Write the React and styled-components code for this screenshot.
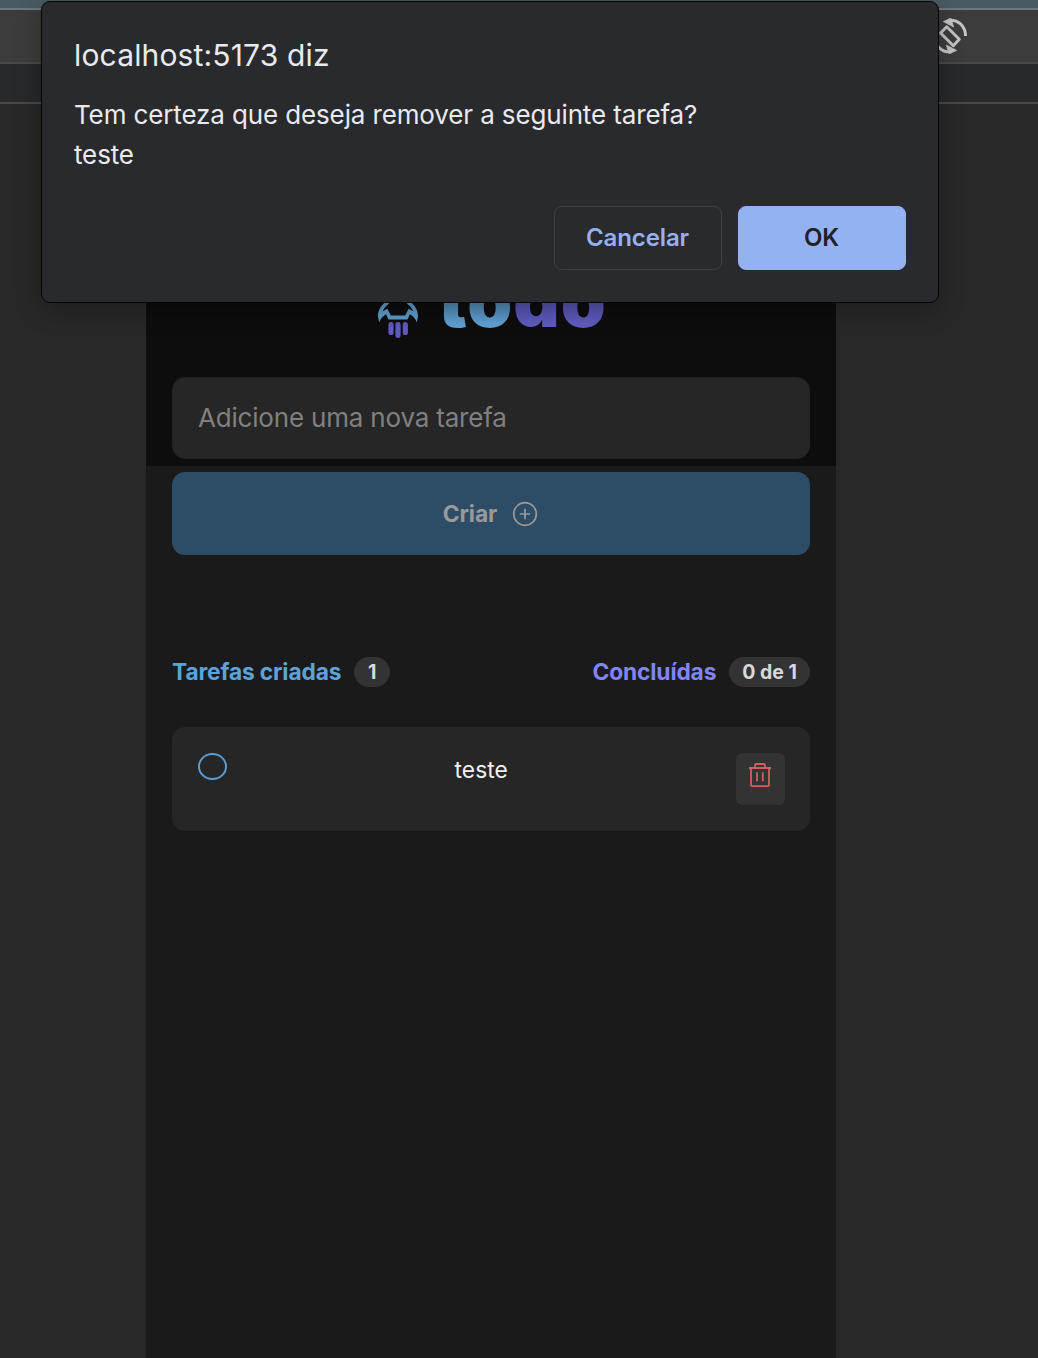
import React from "react";
import styled, { createGlobalStyle } from "styled-components";

const GlobalStyle = createGlobalStyle`
  * { box-sizing: border-box; }
  body {
    margin: 0;
    background: #282828;
    font-family: Inter, "Liberation Sans", sans-serif;
    -webkit-font-smoothing: antialiased;
  }
  h1, p { margin: 0; font-weight: 400; }
`;

const Screen = styled.div`
  height: 1358px;
  overflow: hidden;
  display: flex;
  flex-direction: column;
  position: relative;
`;

const TabStrip = styled.div`
  flex: none;
  height: 10px;
  background: #4a5a63;
  border-bottom: 2px solid #6c787e;
`;

const Toolbar = styled.div`
  flex: none;
  display: flex;
  align-items: center;
  justify-content: flex-end;
  height: ${(p) => p.$height}px;
  padding-right: 70px;
  background: ${(p) => p.$background};
  border-bottom: 2px solid #494949;
`;

const Device = styled.main`
  flex: 1;
  width: 690px;
  margin-left: 146px;
  background: #1a1a1a;
`;

const Header = styled.header`
  display: flex;
  align-items: flex-end;
  justify-content: center;
  gap: 20px;
  height: 362px;
  padding: 0 0 128px 3px;
  background: #0d0d0d;
`;

const Wordmark = styled.div`
  display: flex;
  height: 72px;
  align-items: center;
  margin-bottom: 1px;
  font-size: 72px;
  line-height: 72px;
  font-weight: 900;
  letter-spacing: 1px;
`;

const WordPart = styled.span`
  color: transparent;
  background: linear-gradient(${(p) => p.$from} 55%, ${(p) => p.$to} 80%);
  background-clip: text;
  -webkit-background-clip: text;
`;

const Content = styled.div`
  display: flex;
  flex-direction: column;
  padding: 0 26px;
  margin-top: -89.5px;
`;

const Form = styled.form`
  display: flex;
  flex-direction: column;
  gap: 13px;
`;

const TaskInput = styled.input`
  height: 82.5px;
  padding: 0 25px;
  border: 1px solid #222;
  border-radius: 13px;
  outline: none;
  background: #262626;
  color: #f2f2f2;
  font: 400 26px Inter, "Liberation Sans", sans-serif;
  letter-spacing: -0.19px;
  &::placeholder { color: #808080; opacity: 1; }
`;

const CreateButton = styled.button`
  display: flex;
  align-items: center;
  justify-content: center;
  gap: 15px;
  height: 82.5px;
  padding: 0 1px 0 0;
  border: 0;
  border-radius: 13px;
  background: #2d4d67;
  color: #999;
  font: 700 22.75px Inter, "Liberation Sans", sans-serif;
  letter-spacing: -0.1px;
`;

const Stats = styled.div`
  display: flex;
  justify-content: space-between;
  margin-top: 102px;
`;

const Stat = styled.div`
  display: flex;
  align-items: center;
  gap: 13px;
  color: ${(p) => p.$color};
  font-size: 22.75px;
  line-height: 26px;
  font-weight: 700;
  letter-spacing: -0.14px;
`;

const Badge = styled.span`
  min-width: 36px;
  padding: 3px 13px;
  border-radius: 15px;
  background: #333;
  color: #d9d9d9;
  font-size: 19.5px;
  line-height: 24px;
  letter-spacing: 0;
  text-align: center;
`;

const Task = styled.article`
  display: grid;
  grid-template-columns: 29.5px 1fr 49px;
  align-items: start;
  height: 104px;
  margin-top: 40.5px;
  padding: 26px 25.5px;
  border-radius: 13px;
  background: #262626;
`;

const Check = styled.button`
  height: 27px;
  padding: 0;
  border: 2px solid #5a9dd2;
  border-radius: 50%;
  background: transparent;
`;

const TaskText = styled.p`
  color: #f2f2f2;
  font-size: 22.75px;
  line-height: 33px;
  letter-spacing: 0.1px;
  text-align: center;
`;

const RemoveButton = styled.button`
  display: flex;
  justify-content: center;
  height: 52px;
  padding: 9px 0 0;
  border: 0;
  border-radius: 6.5px;
  background: #333;
`;

const Dialog = styled.section`
  position: absolute;
  top: 1px;
  left: 41px;
  width: 898px;
  height: 302px;
  display: flex;
  flex-direction: column;
  padding: 32px;
  border: 1px solid #050505;
  border-radius: 9px;
  background: #292a2d;
  color: #e8eaed;
  box-shadow: 0 6px 26px rgba(0, 0, 0, 0.28);
`;

const DialogTitle = styled.h1`
  font-size: 30px;
  line-height: 42px;
  letter-spacing: 0.15px;
`;

const DialogMessage = styled.p`
  margin-top: 19px;
  font-size: 26px;
  line-height: 40px;
  letter-spacing: -0.13px;
  white-space: pre-line;
`;

const DialogActions = styled.div`
  display: flex;
  justify-content: flex-end;
  gap: 16px;
  margin-top: auto;
`;

const DialogButton = styled.button`
  width: 168px;
  height: 64px;
  padding: 0 1px 2px 0;
  border: 1px solid ${(p) => (p.$primary ? "#94b1f2" : "#3c4043")};
  border-radius: 8px;
  background: ${(p) => (p.$primary ? "#94b1f2" : "transparent")};
  color: ${(p) => (p.$primary ? "#202124" : "#94b1f2")};
  font: 600 24px Inter, "Liberation Sans", sans-serif;
  letter-spacing: -0.1px;
`;

const RotateIcon = () => (
  <svg width="36" height="40" viewBox="0 0 36 40" fill="none" stroke="#c4c4c4">
    <path d="M14.7 10.7 27.3 23.3 21.3 29.7 8.7 17.1Z" strokeWidth="2.9" strokeLinejoin="round" />
    <path d="M16 4.3C26 3 33.5 10 33.5 20M20 35.7C10 37 2.5 30 2.5 20" strokeWidth="3" />
    <path d="M11.4 5.6 19 2.3 21.6 11ZM24.6 34.4 17 37.7 14.4 29Z" fill="#c4c4c4" stroke="#c4c4c4" strokeWidth="0.8" />
  </svg>
);

const RocketIcon = () => (
  <svg width="40" height="60" viewBox="0 0 40 60" fill="none">
    <path
      d="M10 24C9 15 12 7 20 2C28 7 31 15 30 24"
      stroke="#5b9bc9"
      strokeWidth="3"
    />
    <path
      d="M9.8 22.6C3.8 26 0 32 0 38.2L1.2 44.5C2.6 40.5 4.8 38.3 8.1 36.3L10.5 41.5H29.5L31.9 36.3C35.2 38.3 37.4 40.5 38.8 44.5L40 38.2C40 32 36.2 26 30.2 22.6L29 25.6L32.8 29L35.4 33.2L30.6 30.8L27.2 37.6H12.8L9.4 30.8L4.6 33.2L7.2 29L11 25.6Z"
      fill="#5b9bc9"
    />
    <path d="M13 46.7V54.5M20 46.7V57.3M27.3 46.7V54.5" stroke="#5e5abf" strokeWidth="5.2" strokeLinecap="round" />
  </svg>
);

const PlusIcon = () => (
  <svg width="26" height="27" viewBox="0 -1 26 27" fill="none" stroke="#999" strokeWidth="1.7">
    <circle cx="13" cy="13" r="11.3" />
    <path d="M13 7.8V18.2M7.8 13H18.2" />
  </svg>
);

const TrashIcon = () => (
  <svg width="26" height="26" viewBox="0 0 26 26" fill="none" stroke="#cf605d" strokeWidth="1.8">
    <path d="M2 6H24M8 6V3.2Q8 2 9.2 2H16.8Q18 2 18 3.2V6M4 6V23.3Q4 24.2 4.9 24.2H21.1Q22 24.2 22 23.3V6M10 10.3V19.3M15.8 10.3V19.3" />
  </svg>
);

export default function App() {
  return (
    <Screen>
      <GlobalStyle />
      <TabStrip />
      <Toolbar $height={54} $background="#3c3c3c">
        <RotateIcon />
      </Toolbar>
      <Toolbar $height={40} $background="#28292b" />
      <Device>
        <Header>
          <RocketIcon />
          <Wordmark>
            <WordPart $from="#4f86ad" $to="#5f9fd2">to</WordPart>
            <WordPart $from="#5452ad" $to="#5e5bbf">do</WordPart>
          </Wordmark>
        </Header>
        <Content>
          <Form onSubmit={(e) => e.preventDefault()}>
            <TaskInput placeholder="Adicione uma nova tarefa" />
            <CreateButton>
              Criar
              <PlusIcon />
            </CreateButton>
          </Form>
          <Stats>
            <Stat $color="#5fa2d8">
              Tarefas criadas <Badge>1</Badge>
            </Stat>
            <Stat $color="#8284fa">
              Concluídas <Badge>0 de 1</Badge>
            </Stat>
          </Stats>
          <Task>
            <Check aria-label="Concluir" />
            <TaskText>teste</TaskText>
            <RemoveButton aria-label="Remover">
              <TrashIcon />
            </RemoveButton>
          </Task>
        </Content>
      </Device>
      <Dialog role="alertdialog">
        <DialogTitle>localhost:5173 diz</DialogTitle>
        <DialogMessage>{"Tem certeza que deseja remover a seguinte tarefa?\nteste"}</DialogMessage>
        <DialogActions>
          <DialogButton>Cancelar</DialogButton>
          <DialogButton $primary>OK</DialogButton>
        </DialogActions>
      </Dialog>
    </Screen>
  );
}
